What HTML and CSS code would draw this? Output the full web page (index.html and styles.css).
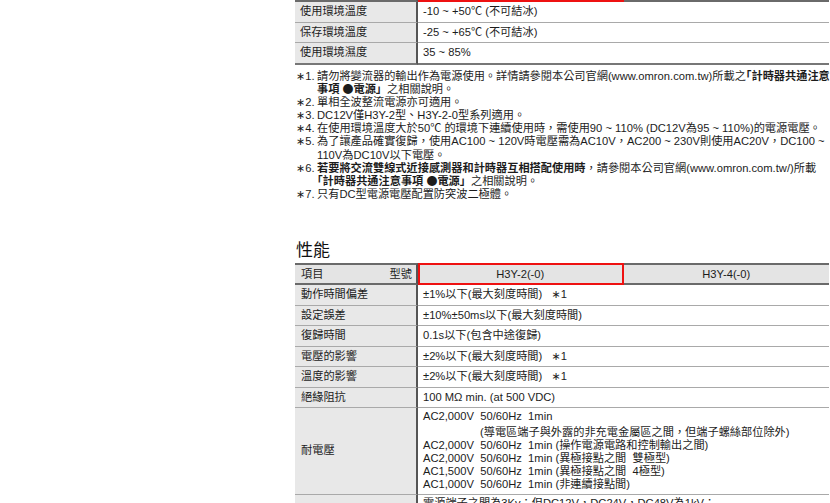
FILE: index.html
```html
<!DOCTYPE html>
<html lang="zh-Hant">
<head>
<meta charset="utf-8">
<title>H3Y 規格</title>
<link rel="stylesheet" href="styles.css">
</head>
<body>
<div class="page">
  <table class="spec spec-top">
    <tr class="head">
      <th class="item"><div class="item-inner"><span>項目</span><span>型號</span></div></th>
      <th class="model sel">H3Y-2(-0)</th>
      <th class="model">H3Y-4(-0)</th>
    </tr>
    <tr><th>使用環境溫度</th><td colspan="2">-10 ~ +50℃ (不可結冰)</td></tr>
    <tr><th>保存環境溫度</th><td colspan="2">-25 ~ +65℃ (不可結冰)</td></tr>
    <tr class="last"><th>使用環境濕度</th><td colspan="2">35 ~ 85%</td></tr>
  </table>

  <ul class="notes">
    <li><span class="mark"><span class="ast">∗</span>1.</span><span class="txt">請勿將變流器的輸出作為電源使用。詳情請參閱本公司官網(www.omron.com.tw)所載之<b><span class="br">「</span>計時器共通注意<br>事項 <span class="dot">●</span>電源」</b>之相關說明。</span></li>
    <li><span class="mark"><span class="ast">∗</span>2.</span><span class="txt">單相全波整流電源亦可適用。</span></li>
    <li><span class="mark"><span class="ast">∗</span>3.</span><span class="txt">DC12V僅H3Y-2型、H3Y-2-0型系列適用。</span></li>
    <li><span class="mark"><span class="ast">∗</span>4.</span><span class="txt">在使用環境溫度大於50℃ 的環境下連續使用時，需使用90 ~ 110% (DC12V為95 ~ 110%)的電源電壓。</span></li>
    <li><span class="mark"><span class="ast">∗</span>5.</span><span class="txt">為了讓產品確實復歸，使用AC100 ~ 120V時電壓需為AC10V，AC200 ~ 230V則使用AC20V，DC100 ~<br>110V為DC10V以下電壓。</span></li>
    <li><span class="mark"><span class="ast">∗</span>6.</span><span class="txt"><b>若要將交流雙線式近接感測器和計時器互相搭配使用時</b>，請參閱本公司官網(www.omron.com.tw/)所載<br><b><span class="br">「</span>計時器共通注意事項 <span class="dot">●</span>電源」</b>之相關說明。</span></li>
    <li><span class="mark"><span class="ast">∗</span>7.</span><span class="txt">只有DC型電源電壓配置防突波二極體。</span></li>
  </ul>

  <h2 class="section-title">性能</h2>

  <table class="spec">
    <tr class="head">
      <th class="item"><div class="item-inner"><span>項目</span><span>型號</span></div></th>
      <th class="model sel">H3Y-2(-0)</th>
      <th class="model">H3Y-4(-0)</th>
    </tr>
    <tr><th>動作時間偏差</th><td colspan="2">±1%以下(最大刻度時間)&nbsp;&nbsp; <span class="ast">∗</span>1</td></tr>
    <tr><th>設定誤差</th><td colspan="2">±10%±50ms以下(最大刻度時間)</td></tr>
    <tr><th>復歸時間</th><td colspan="2">0.1s以下(包含中途復歸)</td></tr>
    <tr><th>電壓的影響</th><td colspan="2">±2%以下(最大刻度時間)&nbsp;&nbsp; <span class="ast">∗</span>1</td></tr>
    <tr><th>溫度的影響</th><td colspan="2">±2%以下(最大刻度時間)&nbsp;&nbsp; <span class="ast">∗</span>1</td></tr>
    <tr><th>絕緣阻抗</th><td colspan="2">100 MΩ min. (at 500 VDC)</td></tr>
    <tr class="multi">
      <th>耐電壓</th>
      <td colspan="2">
        <div class="ln">AC2,000V&nbsp; 50/60Hz&nbsp; 1min</div>
        <div class="ln indent">(導電區端子與外露的非充電金屬區之間，但端子螺絲部位除外)</div>
        <div class="ln">AC2,000V&nbsp; 50/60Hz&nbsp; 1min (操作電源電路和控制輸出之間)</div>
        <div class="ln">AC2,000V&nbsp; 50/60Hz&nbsp; 1min (異極接點之間&nbsp; 雙極型)</div>
        <div class="ln">AC1,500V&nbsp; 50/60Hz&nbsp; 1min (異極接點之間&nbsp; 4極型)</div>
        <div class="ln">AC1,000V&nbsp; 50/60Hz&nbsp; 1min (非連續接點間)</div>
      </td>
    </tr>
    <tr class="multi">
      <th>耐突波電壓</th>
      <td colspan="2">
        <div class="ln">電源端子之間為3Kv；但DC12V，DC24V，DC48V為1kV；</div>
        <div class="ln">導電區端子與外露的非充電金屬區之間為4.5kV；</div>
        <div class="ln">但DC12V，DC24V，DC48V為1.5kV</div>
        <div class="ln">(正負極性脈衝波形 1.2 × 50μs)</div>
      </td>
    </tr>
  </table>
</div>
</body>
</html>
```

FILE: styles.css
```css
html, body {
  margin: 0;
  padding: 0;
  background: #ffffff;
}

body {
  font-family: "Liberation Sans", "Noto Sans CJK TC", sans-serif;
  font-size: 11.2px;
  color: #1c1c1c;
  overflow: hidden;
}

.page {
  margin-top: -20px;
  padding-left: 295px;
  width: 534px;
}

.spec {
  width: 534px;
  border-collapse: separate;
  border-spacing: 0;
  table-layout: fixed;
}

.spec th,
.spec td {
  font-weight: normal;
  text-align: left;
  vertical-align: middle;
  line-height: 13.5px;
  padding: 3px 4px 3px 4px;
  border-bottom: 1px solid #a9a9a9;
  white-space: nowrap;
}

.spec th {
  width: 111px;
  padding-left: 6px;
  background: #e8e8e8;
  border-right: 2px solid #555555;
}

.spec-top th {
  padding-left: 5px;
  width: 112px;
}

.spec td {
  padding-left: 5px;
}

.spec .head th {
  background: #e4e4e4;
  border-top: 2px solid #6a6a6a;
  border-bottom: 2px solid #6a6a6a;
  padding-top: 2px;
  padding-bottom: 2px;
  line-height: 14px;
}

.spec .head th.model {
  width: auto;
  padding-left: 4px;
  text-align: center;
  border-right: 1px solid #c8c8c8;
}

.spec .head th.model:last-child {
  border-right: none;
}

.spec .head th.sel {
  outline: 2px solid #ee1111;
  outline-offset: -2px;
}

.item-inner {
  display: flex;
  justify-content: space-between;
}

.spec-top tr.last th,
.spec-top tr.last td {
  border-bottom: 2px solid #777777;
}

.spec .multi td {
  padding-top: 2px;
  padding-bottom: 2px;
}

.ln {
  line-height: 13.2px;
}

.ln.indent {
  padding-left: 57px;
  margin-top: 2px;
}

.ast {
  font-family: "DejaVu Sans", sans-serif;
  font-size: 11px;
  line-height: 0;
}

.notes {
  list-style: none;
  margin: 5px 0 0 0;
  padding: 0 0 0 1px;
  line-height: 13.2px;
}

.notes li {
  display: flex;
  white-space: nowrap;
  height: 13.2px;
}

.notes li:has(br) {
  height: 26.4px;
}

.notes .mark {
  flex: 0 0 21px;
}

.notes b {
  font-weight: bold;
}

.notes .br {
  font-feature-settings: "halt";
}

.dot {
  font-family: "Noto Sans CJK TC", sans-serif;
  font-size: 11px;
  line-height: 0;
}

.section-title {
  margin: 40px 0 2px 1px;
  font-size: 17px;
  line-height: 20px;
  font-weight: normal;
  color: #111111;
}
```
